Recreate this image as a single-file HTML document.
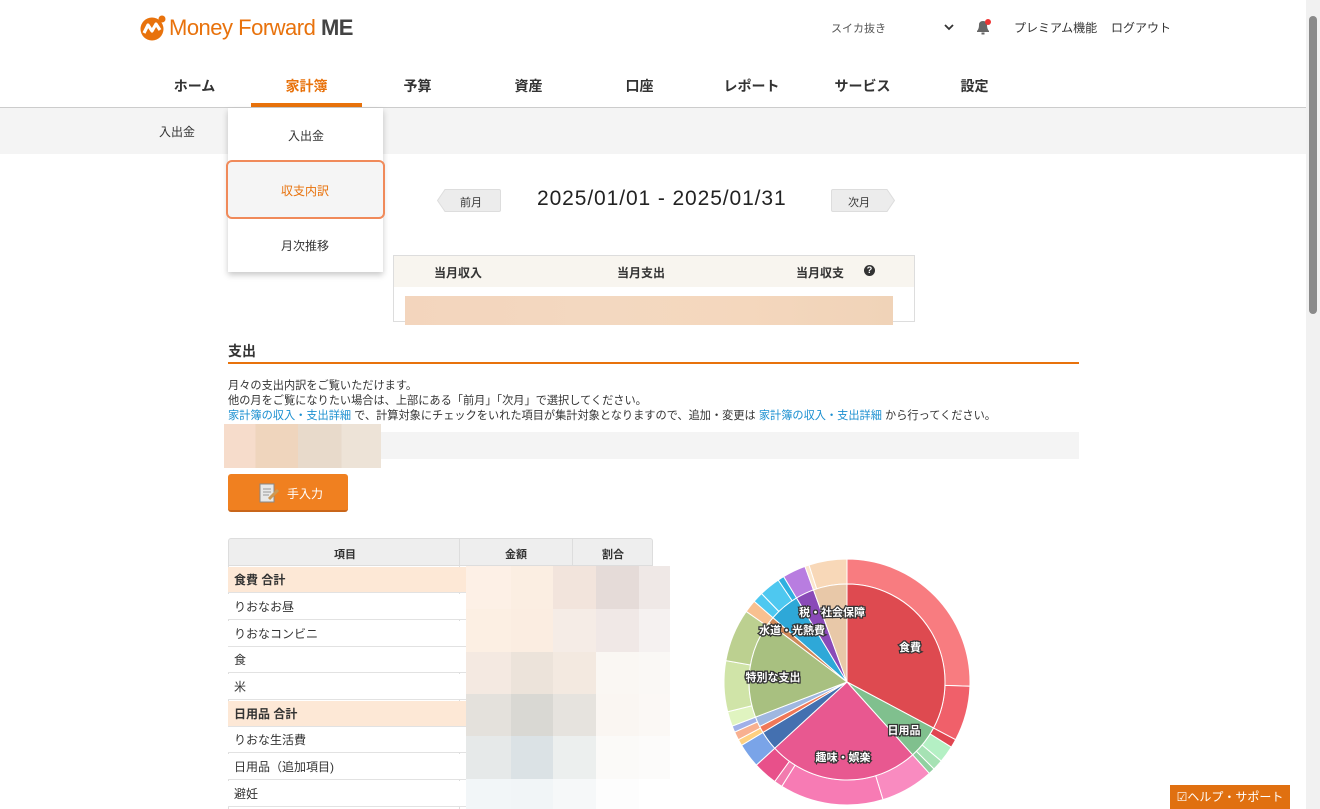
<!DOCTYPE html>
<html><head><meta charset="utf-8">
<style>
*{margin:0;padding:0;box-sizing:border-box}
body{width:1320px;height:809px;overflow:hidden;background:#fff;font-family:"Liberation Sans","Noto Sans CJK JP",sans-serif;color:#333;position:relative}
.a{position:absolute}
.nav span{position:absolute;top:76px;font-size:14px;font-weight:bold;color:#333;width:111px;text-align:center}
.t{font-size:12px;color:#333;white-space:nowrap}
a{color:#1a8fd0;text-decoration:none}
.row{position:absolute;left:228px;width:238px;height:26px;border-bottom:1px solid #e2e2e2;font-size:12px;line-height:26px;padding-left:6px;background:#fff}
.row.h{background:#fde8d6;font-weight:bold}
</style></head><body>
<svg class="a" style="left:139px;top:15px" width="28" height="26" viewBox="0 0 28 26"><circle cx="13" cy="14" r="11.5" fill="#e8720c"/><path d="M5 18 L9 10 L13 16 L17 9 L21 15" stroke="#fff" stroke-width="3.2" fill="none" stroke-linejoin="round"/><circle cx="23" cy="4" r="3.5" fill="#e8720c"/></svg>
<div class="a" style="left:169px;top:15px;font-size:22px;color:#e8720c;letter-spacing:-0.5px">Money Forward <b style="color:#444">ME</b></div>
<div class="a t" style="left:831px;top:20px;font-size:11px;color:#555">スイカ抜き</div>
<svg class="a" style="left:944px;top:23px" width="10" height="8" viewBox="0 0 10 8"><path d="M1 2 L5 6 L9 2" stroke="#333" stroke-width="1.8" fill="none"/></svg>
<svg class="a" style="left:974px;top:18px" width="18" height="18" viewBox="0 0 18 18"><path d="M3 14 L3 13 Q5 11 5 7 Q5 3 9 3 Q13 3 13 7 Q13 11 15 13 L15 14 Z" fill="#666"/><rect x="7.5" y="14.5" width="3" height="2" fill="#666"/><circle cx="14" cy="4" r="3" fill="#e33"/></svg>
<div class="a t" style="left:1014px;top:19px;font-size:12px">プレミアム機能</div>
<div class="a t" style="left:1111px;top:19px;font-size:12px">ログアウト</div>
<div class="a" style="left:1306px;top:0;width:14px;height:809px;background:#f1f1f1"></div>
<div class="a" style="left:1309px;top:16px;width:8px;height:298px;background:#8a8a8a;border-radius:4px"></div>
<div class="nav">
<span style="left:139px">ホーム</span>
<span style="left:251px;color:#e8720c">家計簿</span>
<span style="left:362px">予算</span>
<span style="left:473px">資産</span>
<span style="left:584px">口座</span>
<span style="left:696px">レポート</span>
<span style="left:807px">サービス</span>
<span style="left:919px">設定</span>
</div>
<div class="a" style="left:251px;top:103px;width:111px;height:4px;background:#e8720c"></div>
<div class="a" style="left:0;top:107px;width:1306px;height:1px;background:#ccc"></div>
<div class="a" style="left:0;top:108px;width:1306px;height:46px;background:#f4f4f4"></div>
<div class="a t" style="left:159px;top:123px">入出金</div>
<div class="a" style="left:228px;top:108px;width:155px;height:164px;background:#fff;box-shadow:0 3px 6px rgba(0,0,0,.22)"></div>
<div class="a t" style="left:288px;top:127px">入出金</div>
<div class="a" style="left:226px;top:160px;width:159px;height:59px;border:2px solid #f08a5a;border-radius:6px;background:#f5f5f5"></div>
<div class="a t" style="left:281px;top:182px;color:#e8720c">収支内訳</div>
<div class="a t" style="left:281px;top:237px">月次推移</div>
<svg class="a" style="left:437px;top:189px" width="64" height="23"><path d="M8 0.5 H62 Q63.5 .5 63.5 2 V21 Q63.5 22.5 62 22.5 H8 L.5 11.5 Z" fill="#ececec" stroke="#ddd"/></svg>
<div class="a t" style="left:460px;top:194px;font-size:11px">前月</div>
<div class="a" style="left:537px;top:187px;font-size:21px;color:#222;letter-spacing:0.9px">2025/01/01 - 2025/01/31</div>
<svg class="a" style="left:831px;top:189px" width="64" height="23"><path d="M56 0.5 H2 Q.5 .5 .5 2 V21 Q.5 22.5 2 22.5 H56 L63.5 11.5 Z" fill="#ececec" stroke="#ddd"/></svg>
<div class="a t" style="left:848px;top:194px;font-size:11px">次月</div>
<div class="a" style="left:393px;top:255px;width:522px;height:67px;border:1px solid #ddd;background:#fff"></div>
<div class="a" style="left:394px;top:256px;width:520px;height:31px;background:#f8f5ef"></div>
<div class="a t" style="left:434px;top:264px;font-weight:bold;font-size:12px">当月収入</div>
<div class="a t" style="left:617px;top:264px;font-weight:bold;font-size:12px">当月支出</div>
<div class="a t" style="left:796px;top:264px;font-weight:bold;font-size:12px">当月収支</div>
<div class="a" style="left:864px;top:265px;width:11px;height:11px;border-radius:50%;background:#333;color:#fff;font-size:9px;line-height:11px;text-align:center;font-weight:bold">?</div>
<div class="a" style="left:405px;top:296px;width:488px;height:29px;background:linear-gradient(90deg,#f3d5bd,#f3d8c0 40%,#f4d7bd 70%,#f0d3b8)"></div>
<div class="a" style="left:228px;top:341px;font-size:14px;font-weight:bold">支出</div>
<div class="a" style="left:228px;top:362px;width:851px;height:2px;background:#e8720c"></div>
<div class="a t" style="left:228px;top:377px;font-size:11.2px">月々の支出内訳をご覧いただけます。</div>
<div class="a t" style="left:228px;top:392px;font-size:11.2px">他の月をご覧になりたい場合は、上部にある「前月」「次月」で選択してください。</div>
<div class="a t" style="left:228px;top:407px;font-size:11.2px"><a>家計簿の収入・支出詳細</a> で、計算対象にチェックをいれた項目が集計対象となりますので、追加・変更は <a>家計簿の収入・支出詳細</a> から行ってください。</div>
<div class="a" style="left:226px;top:432px;width:853px;height:27px;background:#f4f4f4"></div>
<div class="a" style="left:224px;top:424px;width:157px;height:44px;background:linear-gradient(90deg,#f6dccb 0 20%,#efd5bd 20% 47%,#e8dacb 47% 75%,#ede3d7 75%)"></div>
<div class="a" style="left:228px;top:474px;width:120px;height:38px;background:#f08020;border-radius:3px;border-bottom:2px solid #c9661a"></div>
<svg class="a" style="left:257px;top:481px" width="24" height="24"><rect x="3" y="3" width="14" height="18" fill="#e8e8e8" stroke="#888"/><path d="M6 8h8M6 11h8M6 14h6" stroke="#999"/><path d="M12 18 L21 9" stroke="#c95" stroke-width="3"/></svg>
<div class="a t" style="left:287px;top:485px;color:#fff;font-size:12px">手入力</div>
<div class="a" style="left:228px;top:538px;width:425px;height:28px;background:#eee;border:1px solid #ddd;border-radius:3px 3px 0 0"></div>
<div class="a" style="left:459px;top:538px;width:1px;height:271px;background:#ddd"></div>
<div class="a" style="left:572px;top:538px;width:1px;height:28px;background:#ddd"></div>
<div class="a t" style="left:334px;top:546px;font-size:11px;font-weight:bold">項目</div>
<div class="a t" style="left:505px;top:546px;font-size:11px;font-weight:bold">金額</div>
<div class="a t" style="left:602px;top:546px;font-size:11px;font-weight:bold">割合</div>
<div class="a" style="left:228px;top:566px;width:1px;height:243px;background:#ddd"></div>
<div class="row h" style="top:567px">食費 合計</div>
<div class="row" style="top:594px">りおなお昼</div>
<div class="row" style="top:621px">りおなコンビニ</div>
<div class="row" style="top:647px">食</div>
<div class="row" style="top:674px">米</div>
<div class="row h" style="top:701px">日用品 合計</div>
<div class="row" style="top:727px">りおな生活費</div>
<div class="row" style="top:754px">日用品（追加項目)</div>
<div class="row" style="top:781px">避妊</div>
<div class="a" style="left:466px;top:566px;width:204px;height:243px;display:grid;grid-template-columns:45px 42px 43px 43px 31px;grid-template-rows:43px 43px 42px 42px 43px 30px">
<div style="background:#fdf0e6"></div><div style="background:#fbeee2"></div><div style="background:#f2e4dc"></div><div style="background:#e5dbd8"></div><div style="background:#efe8e6"></div>
<div style="background:#fcefe3"></div><div style="background:#fbede1"></div><div style="background:#f5ece6"></div><div style="background:#f0e8e6"></div><div style="background:#f5f1f0"></div>
<div style="background:#f4e9e1"></div><div style="background:#ece3da"></div><div style="background:#f3e9e0"></div><div style="background:#faf7f3"></div><div style="background:#faf8f5"></div>
<div style="background:#e4e1dc"></div><div style="background:#d9d8d3"></div><div style="background:#e6e3de"></div><div style="background:#faf6f2"></div><div style="background:#fbf8f5"></div>
<div style="background:#e6e9e9"></div><div style="background:#dbe2e5"></div><div style="background:#ecefee"></div><div style="background:#fbfaf8"></div><div style="background:#fcfbfa"></div>
<div style="background:#f2f6f8"></div><div style="background:#f1f5f7"></div><div style="background:#f6f8f9"></div><div style="background:#fdfdfd"></div><div style="background:#fff"></div>
</div>
<svg id="pie" class="a" style="left:700px;top:540px" width="300" height="269"></svg>
<div class="a" style="left:1170px;top:785px;width:120px;height:24px;background:#e07010;color:#fff;font-size:12px;line-height:24px;text-align:center">☑ヘルプ・サポート</div>
<script>
var cx=147,cy=142,ri=98,ro=123,s=document.getElementById('pie'),h='';
function p(a){return (a-90)*Math.PI/180}
function arc(r0,r1,a0,a1,c){var A=p(a0),B=p(a1),l=(a1-a0)>180?1:0;
var x0=cx+r1*Math.cos(A),y0=cy+r1*Math.sin(A),x1=cx+r1*Math.cos(B),y1=cy+r1*Math.sin(B);
var d;if(r0==0)d='M'+cx+' '+cy+'L'+x0+' '+y0+'A'+r1+' '+r1+' 0 '+l+' 1 '+x1+' '+y1+'Z';
else{var x2=cx+r0*Math.cos(B),y2=cy+r0*Math.sin(B),x3=cx+r0*Math.cos(A),y3=cy+r0*Math.sin(A);
d='M'+x0+' '+y0+'A'+r1+' '+r1+' 0 '+l+' 1 '+x1+' '+y1+'L'+x2+' '+y2+'A'+r0+' '+r0+' 0 '+l+' 0 '+x3+' '+y3+'Z';}
h+='<path d="'+d+'" fill="'+c+'" stroke="#fff" stroke-width="1"/>';}
var inner=[[0,118,'#de4a50'],[118,138,'#80c08e'],[138,227.5,'#e85890'],[227.5,239,'#4470b0'],[239,243,'#f07858'],[243,249,'#9fb7e0'],[249,307,'#a8c080'],[307,311,'#d08858'],[311,329,'#2ea8d8'],[329,340,'#8a4ab8'],[340,360,'#e8c8a8']];
var outer=[[0,92,'#f87c80'],[92,118,'#f0606a'],[118,122,'#e04550'],[122,130,'#b4f0c4'],[130,135,'#a6e2b4'],[135,138,'#90d0a0'],[138,163,'#f98bc0'],[163,212,'#f77bb4'],[212,216,'#f27aae'],[216,227.5,'#e8508a'],[227.5,239,'#7aa4e8'],[239,242,'#ffd080'],[242,246,'#f8b090'],[246,249,'#a0b0e8'],[249,256,'#e0f4c0'],[256,280,'#d0e4a8'],[280,305,'#bcd090'],[305,311,'#f8c090'],[311,316,'#4ec8f0'],[316,326,'#4ec8f0'],[326,329,'#30b0e0'],[329,340,'#b87de0'],[340,342,'#fbe6cc'],[342,360,'#f8d8b8']];
outer.forEach(function(o){arc(ri,ro,o[0],o[1],o[2])});
inner.forEach(function(o){arc(0,ri,o[0],o[1],o[2])});
function t(x,y,s2){h+='<text x="'+x+'" y="'+y+'" font-size="11" font-weight="bold" fill="#fff" stroke="#333" stroke-width="2.5" paint-order="stroke" text-anchor="middle" font-family="Liberation Sans,Noto Sans CJK JP,sans-serif">'+s2+'</text>';}
t(210,111,'食費');t(132,76,'税・社会保障');t(92,94,'水道・光熱費');t(73,141,'特別な支出');t(204,194,'日用品');t(143,221,'趣味・娯楽');
s.innerHTML=h;
</script>
</body></html>
